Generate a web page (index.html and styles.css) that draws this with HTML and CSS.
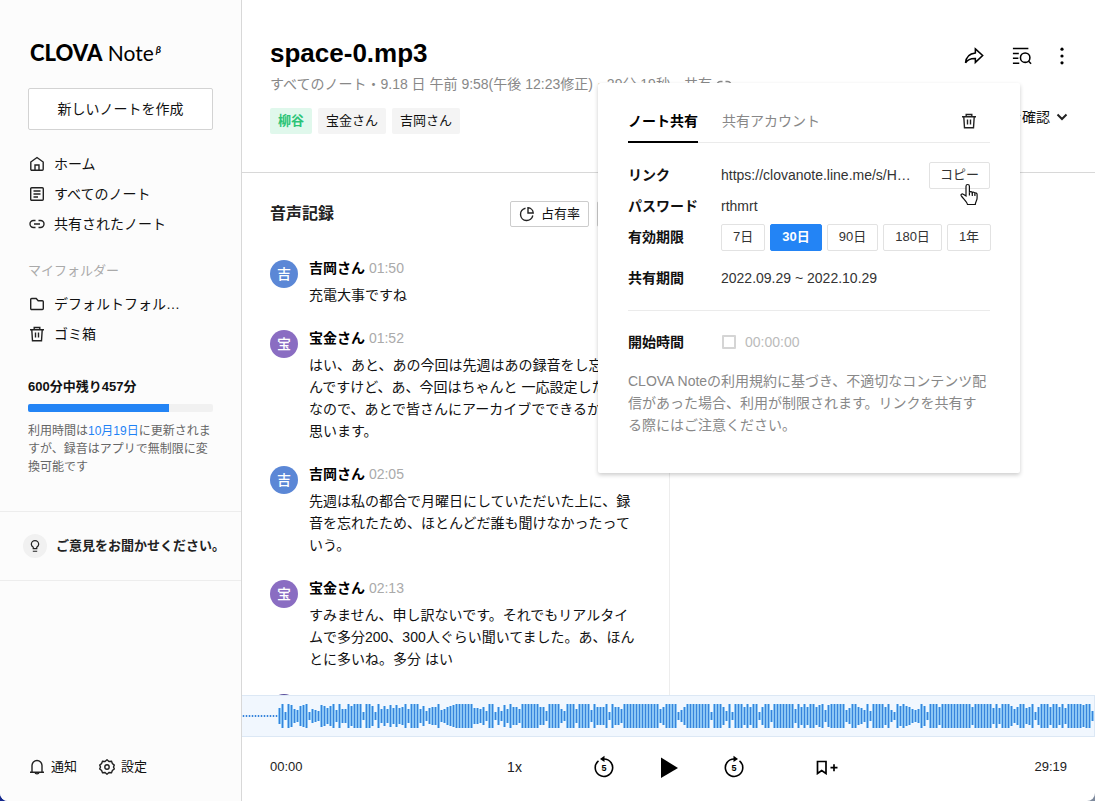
FILE: index.html
```html
<!DOCTYPE html>
<html lang="ja">
<head>
<meta charset="utf-8">
<title>CLOVA Note</title>
<link rel="stylesheet" href="styles.css">
</head>
<body>
<svg class="defs" width="0" height="0" aria-hidden="true">
  <symbol id="trash" viewBox="0 0 16 16"><path d="M1 3.8h14M5.2 3.6V1.5h5.6v2.1M2.8 4l.7 10.7h9L13.200 4M6.500 6.600v5M9.500 6.600v5"/></symbol>
  <symbol id="link" viewBox="0 0 16 16"><path d="M6.500 4.500H4.500a3.500 3.500 0 0 0 0 7h2M9.500 4.500h2a3.500 3.500 0 0 1 0 7h-2M5 8h6"/></symbol>
</svg>
<div class="app">
  <aside class="sidebar">
    <div class="logo"><b>CLOVA</b> Note<sup>β</sup></div>
    <button class="new-note" type="button">新しいノートを作成</button>
    <nav class="nav">
      <a href="#home"><svg class="icon" viewBox="0 0 16 16"><path d="M1.800 6 8 1.500 14.200 6V13.300a1 1 0 0 1-1 1H2.800a1 1 0 0 1-1-1zM6 14.300V9h4v5.300"/></svg>ホーム</a>
      <a href="#all"><svg class="icon" viewBox="0 0 16 16"><rect x="1.700" y="1.700" width="12.600" height="12.600" rx="1"/><path d="M4.500 5h7M4.500 8h7M4.500 11h4.500"/></svg>すべてのノート</a>
      <a href="#shared"><svg class="icon"><use href="#link"/></svg>共有されたノート</a>
    </nav>
    <h2 class="folder-title">マイフォルダー</h2>
    <nav class="nav">
      <a href="#default"><svg class="icon" viewBox="0 0 16 16"><path d="M2.700 2.500h4.500l2 2.300h4.100a1 1 0 0 1 1 1v6.700a1 1 0 0 1-1 1H2.700a1 1 0 0 1-1-1v-9a1 1 0 0 1 1-1z"/></svg>デフォルトフォル…</a>
      <a href="#trash"><svg class="icon"><use href="#trash"/></svg>ゴミ箱</a>
    </nav>
    <section class="quota">
      <h2>600分中残り457分</h2>
      <div class="bar"><div class="bar-fill" style="width:76%"></div></div>
      <p>利用時間は<span>10月19日</span>に更新されますが、録音はアプリで無制限に変換可能です</p>
    </section>
    <a class="feedback" href="#feedback"><span class="bulb"><svg viewBox="0 0 16 16"><path d="M6 11V9.500C4.500 8.500 3.800 7.400 3.800 6a4.200 4.200 0 0 1 8.400 0c0 1.400-.7 2.500-2.200 3.500V11zM5.500 14h5"/></svg></span>ご意見をお聞かせください。</a>
    <footer class="side-foot">
      <a href="#notice"><svg class="icon" viewBox="0 0 16 16"><path d="M1 13.200h14M3 13V6.500a5 5 0 0 1 10 0V13M6 13.500c.3 1.800 3.700 1.800 4 0"/></svg>通知</a>
      <a href="#settings"><svg class="icon" viewBox="0 0 16 16"><path d="M8 .8 10 2.500l2.500-.3.900 2.300 1.900 1.600L14.500 8l.8 2-1.900 1.500-.9 2.300-2.500-.3L8 15.200l-2-1.700-2.500.3-.9-2.300L.7 10l.8-2-.8-1.900 1.900-1.600.9-2.300 2.500.3z"/><circle cx="8" cy="8" r="2.200"/></svg>設定</a>
    </footer>
  </aside>

  <main class="main">
    <header class="head">
      <div class="head-info">
        <h1>space-0.mp3</h1>
        <p class="meta">すべてのノート・9.18 日 午前 9:58(午後 12:23修正)・29分 19秒・共有 <svg class="meta-icon"><use href="#link"/></svg></p>
        <div class="tags"><span class="tag tag-on">柳谷</span><span class="tag">宝金さん</span><span class="tag">吉岡さん</span></div>
      </div>
      <div class="head-side">
        <div class="actions">
          <button type="button" aria-label="共有"><svg viewBox="0 0 22 20"><path d="M12.500 2.200 20.500 9.500l-8 7.500v-4.300C7.500 12.500 4 13.800 1.700 17.600 2.200 11 6.500 7.200 12.500 6.600z"/></svg></button>
          <button type="button" aria-label="検索"><svg viewBox="0 0 22 20"><path d="M1 1.800h17M1 7.200h6.500M1 12.500h6M1 18h7"/><circle cx="14.500" cy="11.800" r="5.200"/><path d="m18 15.500 3 3"/></svg></button>
          <button type="button" aria-label="メニュー" class="more"><svg viewBox="0 0 6 20"><circle cx="3" cy="3.200" r="1.600"/><circle cx="3" cy="10" r="1.600"/><circle cx="3" cy="16.800" r="1.600"/></svg></button>
        </div>
        <button type="button" class="confirm">内容を確認<svg viewBox="0 0 12 12"><path d="m1.500 3.500 4.500 4.500 4.500-4.500"/></svg></button>
      </div>

      <section class="popup" aria-label="ノート共有">
        <div class="tabs">
          <button type="button" class="tab tab-on">ノート共有</button>
          <button type="button" class="tab">共有アカウント</button>
          <button type="button" class="delete" aria-label="削除"><svg class="icon"><use href="#trash"/></svg></button>
        </div>
        <div class="row row-link"><span class="label">リンク</span><span class="url">https://clovanote.line.me/s/H…</span>
          <button type="button" class="opt copy">コピー<svg class="pointer" viewBox="0 0 18 23"><path d="M6 13V3.200a1.700 1.700 0 0 1 3.400 0V9.500c.5-1.300 2.700-1.100 2.900.3.600-1 2.400-.7 2.600.6.700-.8 2.200-.4 2.200 1V15c0 2.300-1.600 3.500-1.800 6.500H7.500C7 18.500 3.500 16 1.300 12.800c-.9-1.400.8-2.500 2-1.500z"/><path d="M9.400 9.500v3M12.300 10v3M14.900 11v2"/></svg></button>
        </div>
        <div class="row row-pass"><span class="label">パスワード</span><span>rthmrt</span></div>
        <div class="row row-term"><span class="label">有効期限</span>
          <div class="opts"><button type="button" class="opt">7日</button><button type="button" class="opt opt-on">30日</button><button type="button" class="opt">90日</button><button type="button" class="opt">180日</button><button type="button" class="opt">1年</button></div>
        </div>
        <div class="row row-period"><span class="label">共有期間</span><span>2022.09.29 ~ 2022.10.29</span></div>
        <div class="row row-start"><span class="label">開始時間</span><label class="start"><input type="checkbox">00:00:00</label></div>
        <p class="notice">CLOVA Noteの利用規約に基づき、不適切なコンテンツ配信があった場合、利用が制限されます。リンクを共有する際にはご注意ください。</p>
      </section>
    </header>

    <div class="content">
      <section class="record">
        <div class="record-head">
          <h2>音声記録</h2>
          <button type="button" class="small-btn"><svg viewBox="0 0 16 16"><path d="M6.500 2.200A6.200 6.200 0 1 0 13.800 9.500M9 1.800v5.200h5.200A5.400 5.400 0 0 0 9 1.800z"/></svg>占有率</button>
          <button type="button" class="small-btn edit">編集</button>
        </div>
        <article class="talk"><span class="avatar">吉</span><div><h3>吉岡さん <time>01:50</time></h3><p>充電大事ですね</p></div></article>
        <article class="talk"><span class="avatar avatar-b">宝</span><div><h3>宝金さん <time>01:52</time></h3><p>はい、あと、あの今回は先週はあの録音をし忘れたんですけど、あ、今回はちゃんと 一応設定したのかなので、あとで皆さんにアーカイブでできるかなと思います。</p></div></article>
        <article class="talk"><span class="avatar">吉</span><div><h3>吉岡さん <time>02:05</time></h3><p>先週は私の都合で月曜日にしていただいた上に、録音を忘れたため、ほとんどだ誰も聞けなかったっていう。</p></div></article>
        <article class="talk"><span class="avatar avatar-b">宝</span><div><h3>宝金さん <time>02:13</time></h3><p>すみません、申し訳ないです。それでもリアルタイムで多分200、300人ぐらい聞いてました。あ、ほんとに多いね。多分 はい</p></div></article>
        <article class="talk"><span class="avatar avatar-c"></span></article>
      </section>
    </div>

    <div class="wave"><svg class="wave-svg" height="40"><path class="wave-glow"/><path class="wave-bars"/></svg></div>

    <footer class="player">
      <time>00:00</time>
      <div class="controls">
        <button type="button" class="speed">1x</button>
        <div class="transport">
          <button type="button" aria-label="5秒戻る"><svg class="skip" viewBox="0 0 20 22"><path d="M4.500 4.900A8.700 8.700 0 1 0 10 3H8"/><path class="solid" d="M10.500-.2v6.200L6 3z"/><text x="10" y="15">5</text></svg></button>
          <button type="button" aria-label="再生"><svg class="play" viewBox="0 0 18 22"><path d="M1 1.500 18 12 1 22z"/></svg></button>
          <button type="button" aria-label="5秒進む"><svg class="skip" viewBox="0 0 20 22"><path d="M15.500 4.900A8.700 8.700 0 1 1 10 3h2"/><path class="solid" d="M9.500-.2v6.200L14 3z"/><text x="10" y="15">5</text></svg></button>
        </div>
        <button type="button" aria-label="ブックマーク追加"><svg class="mark" viewBox="0 0 22 16"><path d="M1.500 2.500h8.500v12L5.700 11.500l-4.200 3zM14.500 8.700h7M18 5.200v7"/></svg></button>
      </div>
      <time>29:19</time>
    </footer>
  </main>
</div>
<script src="wave.js"></script>
</body>
</html>
```
FILE: styles.css
```css
* { box-sizing: border-box; }
html { background: linear-gradient(90deg, #14288c 50%, #7d899c 50%); }
body {
  margin: 0;
  font: 14px/22px "Liberation Sans", "Noto Sans CJK JP", sans-serif;
  color: #111;
}
h1, h2, h3, p { margin: 0; }
a { color: inherit; text-decoration: none; }
button {
  font: inherit;
  color: inherit;
  background: none;
  border: 0;
  padding: 0;
  white-space: nowrap;
}
button svg { display: block; }
svg { fill: none; stroke: #222; stroke-width: 1.4; flex: none; }
.defs { position: absolute; }
.icon { width: 16px; height: 16px; }

.app {
  display: grid;
  grid-template-columns: 242px minmax(0, 1fr);
  height: 100vh;
  overflow: hidden;
  background: #fff;
  border-radius: 0 0 8px 8px;
}

/* Sidebar */
.sidebar {
  display: flex;
  flex-direction: column;
  padding: 38px 0 24px;
  background: #fcfcfc;
  border-right: 1px solid #d8d8d8;
}
.sidebar > * { margin-left: 28px; margin-right: 28px; }
.logo { font: 21px/30px Lato, sans-serif; color: #000; padding-left: 2px; white-space: nowrap; }
.logo b { font-size: 22px; font-weight: 900; }
.logo sup { font-size: 10px; font-style: italic; font-weight: 700; line-height: 10px; vertical-align: 8px; margin-left: 2px; }
.new-note {
  margin-top: 20px;
  height: 42px;
  border: 1px solid #d3d3d3;
  border-radius: 2px;
  background: #fff;
}
.nav { display: flex; flex-direction: column; }
.new-note + .nav { margin-top: 19px; }
.nav a { display: flex; align-items: center; gap: 9px; height: 30px; padding-left: 1px; }
.folder-title { margin-top: 22px; margin-bottom: 8px; font-size: 13px; line-height: 20px; font-weight: 400; color: #aaa; }
.quota { margin-top: 28px; }
.quota h2 { font-size: 13px; line-height: 20px; }
.bar { height: 8px; margin-top: 7px; background: #f1f1f1; border-radius: 2px; overflow: hidden; }
.bar-fill { height: 100%; background: #2384f5; }
.quota p { margin-top: 10px; font-size: 12px; line-height: 18px; color: #666; }
.quota span { color: #1e82f5; }
.feedback {
  display: flex;
  align-items: center;
  gap: 9px;
  height: 70px;
  margin-top: 35px;
  padding-left: 23px;
  border: solid #ededed;
  border-width: 1px 0;
  font-size: 13px;
  font-weight: 700;
  color: #222;
  white-space: nowrap;
}
.sidebar > .feedback { margin-left: 0; margin-right: 0; }
.bulb { display: grid; place-items: center; width: 24px; height: 24px; border-radius: 50%; background: #f1f1f1; }
.bulb svg { width: 14px; height: 14px; }
.side-foot { display: flex; gap: 21px; margin-top: auto; font-size: 13px; line-height: 20px; }
.side-foot a { display: flex; align-items: center; gap: 6px; padding-left: 1px; }

/* Header */
.main { display: flex; flex-direction: column; min-width: 0; min-height: 0; }
.head {
  position: relative;
  z-index: 1;
  display: flex;
  justify-content: space-between;
  padding: 37px 27px 38px 28px;
  border-bottom: 1px solid #d8d8d8;
}
.head h1 { font-size: 26px; line-height: 32px; color: #000; }
.meta { margin-top: 5px; line-height: 20px; color: #888; white-space: nowrap; }
.meta-icon { width: 16px; height: 16px; stroke: #888; vertical-align: -4px; }
.tags { display: flex; gap: 6px; margin-top: 14px; font-size: 13px; line-height: 26px; }
.tag { padding: 0 8px; background: #f4f4f4; border-radius: 2px; }
.tag-on { background: #e0f8ec; color: #2cc477; font-weight: 700; }
.head-side { display: flex; flex-direction: column; align-items: flex-end; gap: 40px; padding-top: 9px; }
.actions { display: flex; gap: 28px; }
.actions svg { width: 20px; height: 20px; stroke: #000; stroke-width: 1.7; }
.actions .more { margin-right: 3px; margin-left: -1px; }
.actions .more svg { width: 6px; fill: #000; stroke: none; }
.confirm { display: flex; align-items: center; gap: 6px; }
.confirm svg { width: 12px; height: 12px; stroke-width: 2; }

/* Share popup */
.popup {
  position: absolute;
  top: 83px;
  right: 75px;
  width: 422px;
  padding: 17px 30px 37px;
  background: #fff;
  border-radius: 2px;
  box-shadow: 0 2px 4px rgba(0, 0, 0, .2);
  color: #333;
}
.tabs { display: flex; gap: 24px; height: 43px; border-bottom: 1px solid #ebebeb; }
.tab { height: 43px; color: #888; border-bottom: 2px solid transparent; }
.tab-on { color: #000; font-weight: 700; border-color: #000; }
.delete { margin-left: auto; margin-right: 13px; }
.row { display: flex; align-items: center; height: 22px; }
.label { flex: none; width: 93px; font-weight: 700; color: #111; }
.row-link { height: 26px; margin-top: 19px; }
.row-pass { height: 35px; }
.row-term { height: 28px; }
.row-period { margin-top: 16px; }
.row-start { margin-top: 21px; padding-top: 19px; height: 43px; border-top: 1px solid #ebebeb; }
.opts { display: flex; gap: 5px; }
.opt {
  height: 27px;
  padding: 0 11px;
  font-size: 13px;
  border: 1px solid #e2e2e2;
  border-radius: 2px;
}
.opt-on { background: #2384f5; border-color: #2384f5; color: #fff; font-weight: 700; }
.copy { position: relative; margin-left: auto; padding: 0 10px; }
.pointer {
  position: absolute;
  left: 30px;
  top: 20px;
  width: 18px;
  height: 23px;
  fill: #fff;
  stroke: #111;
  stroke-width: 1.2;
}
.start { display: flex; align-items: center; gap: 9px; color: #bbb; }
.start input {
  appearance: none;
  width: 14px;
  height: 14px;
  margin: 0 0 0 1px;
  border: 2px solid #d5d5d5;
  border-radius: 1px;
}
.notice { margin-top: 17px; color: #888; word-break: break-all; }

/* Transcript */
.content { flex: 1; min-height: 0; overflow: hidden; display: flex; }
.record { flex: 0 1 428px; padding: 28px 28px 0; border-right: 1px solid #ededed; overflow: hidden; }
.record-head { display: flex; align-items: center; gap: 8px; height: 26px; margin-bottom: 30px; }
.record-head h2 { margin-right: auto; font-size: 16px; color: #222; }
.small-btn {
  display: flex;
  align-items: center;
  gap: 6px;
  height: 26px;
  padding: 0 8px;
  font-size: 13px;
  border: 1px solid #ccc;
  border-radius: 2px;
}
.small-btn svg { width: 16px; height: 16px; }
.talk { display: flex; gap: 11px; margin-bottom: 21px; }
.talk h3 { font-size: 14px; color: #000; margin-bottom: 5px; }
.talk time { font-weight: 400; color: #aaa; }
.talk p { line-break: strict; }
.avatar {
  flex: none;
  width: 28px;
  height: 28px;
  margin-top: 3px;
  border-radius: 50%;
  background: #5b87d6;
  color: #fff;
  font-weight: 500;
  line-height: 28px;
  text-align: center;
}
.avatar-b { background: #8a6dc2; }
.avatar-c { background: #5a4f9c; }

/* Waveform and player */
.wave { height: 42px; background: #f1f7fe; border: 1px solid #dce8f5; border-left: 0; overflow: hidden; flex: none; }
.wave-svg { display: block; width: 100%; }
.wave-glow { stroke: #a9dcfc; stroke-width: 3; }
.wave-bars { stroke: #3784dc; stroke-width: 1.5; }
.player {
  display: grid;
  grid-template-columns: 1fr auto 1fr;
  align-items: center;
  height: 64px;
  flex: none;
  padding: 0 28px 4px;
  font-size: 13px;
  color: #222;
}
.player > time:last-child { text-align: right; }
.controls { display: flex; align-items: center; gap: 72px; padding-left: 8px; }
.speed { font-size: 14px; }
.transport { display: flex; align-items: center; gap: 46px; }
.skip { width: 20px; height: 22px; stroke: #000; stroke-width: 1.6; overflow: visible; }
.skip .solid { fill: #000; stroke: none; }
.skip text { font: 700 9px "Liberation Sans", sans-serif; fill: #000; stroke: none; text-anchor: middle; }
.play { width: 18px; height: 22px; fill: #000; stroke: none; overflow: visible; }
.mark { width: 22px; height: 16px; stroke: #000; stroke-width: 1.7; }
```
FILE: wave.js
```js
// Half-height of each bar in base 12, one bar every three pixels.
const levels =
  "000000000000" +
  "7b3ba659ab3654a979b5b66b9bbb3bb93b696a7a78b6bbb694788b5689abbbbbb77684bb384a6b886" +
  "bbbbbb884bbbb64bbb6bbbb5b888b3b886bbbbbbbbbbbb68bbbb" +
  "358bbbbbbbb3bbb84b3bbb8b8bb38bb5bbbbbbb6b8b8bb8ab5abbbbb57bb875b4bbbb8b53b9b98656b93" +
  "bbb8bbbbbbbbbb8bbbbbb7b7bbb968bb78b38bbb8bb8b7bbbbbabb4";
const start = 12;
let bars = "";
let glow = "";
for (let i = 0; i < levels.length; i++) {
  const half = parseInt(levels[i], 12);
  const bar = `M${i * 3 + 1.5} ${19 - half}v${half * 2 + 2}`;
  bars += bar;
  if (i >= start) glow += bar;
}
document.querySelector(".wave-bars").setAttribute("d", bars);
document.querySelector(".wave-glow").setAttribute("d", glow);
```
